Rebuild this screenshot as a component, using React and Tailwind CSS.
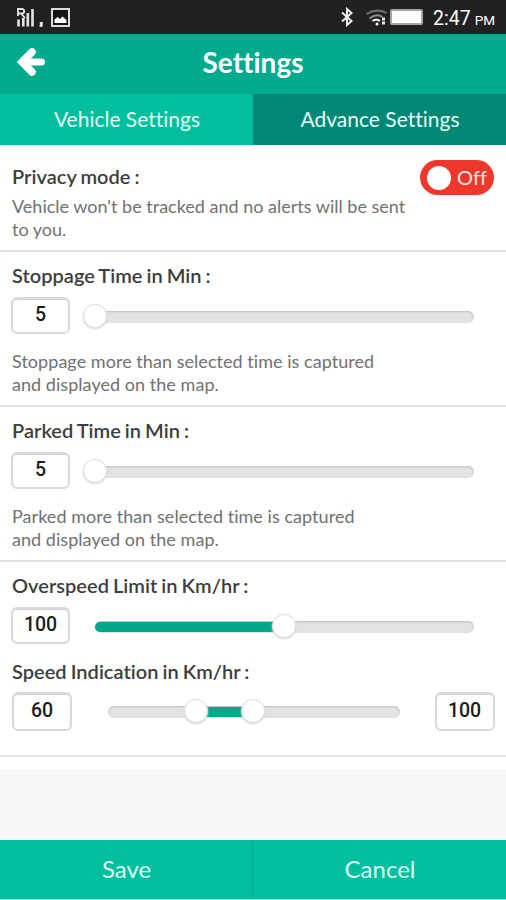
import React from "react";

function StatusBar() {
  return (
    <div className="flex h-[34px] items-center bg-[#212121] pr-[11px] pl-4 text-white">
      <svg width="27" height="20" viewBox="0 0 27 20" fill="none" stroke="#e4e4e4">
        <path d="M2 9V2h4a2 2 0 0 1 0 4.500H2M5 6.500l4 4.500" strokeWidth="1.800" />
        <path d="M2.500 12.500V19.500M7.300 11V19.500" strokeWidth="2.600" />
        <path d="M11.800 6V19.500M16.500 2V19.500" strokeWidth="2.600" />
        <path d="M25.300 15v3.500l-.8 1.500" strokeWidth="3" />
      </svg>
      <svg className="ml-2" width="19" height="19" viewBox="0 0 19 19">
        <rect x="1" y="1" width="17" height="17" fill="#151515" stroke="#dcdcdc" strokeWidth="2" />
        <path d="M3.500 15v-3.500l3-2.500 2.500 2 2.500-2.500 4 3.500v3z" fill="#fff" />
      </svg>
      <div className="flex-1" />
      <svg width="14" height="20" viewBox="0 0 14 20" fill="none" stroke="#ececec" strokeWidth="2">
        <path d="M2 5.500 11.500 14 7 18V2l4.500 4L2 14.500" />
      </svg>
      <svg className="ml-[11px]" width="24" height="20" viewBox="0 0 24 20" fill="none">
        <path d="M1.500 7Q11.500 1 21.500 6" stroke="#6e6e6e" strokeWidth="2.200" />
        <path d="M4.500 11.500Q11.500 6 17.500 10" stroke="#8a8a8a" strokeWidth="2" />
        <path d="M7.500 14Q11.500 11.500 15 14" stroke="#f0f0f0" strokeWidth="2" />
        <circle cx="12" cy="17" r="1.500" fill="#fff" />
        <path d="M18.500 10.500v3M18.500 14.500v3" stroke="#e5e5e5" strokeWidth="3" />
      </svg>
      <div className="ml-[1px] h-4 w-[33px] rounded-[2px] border-2 border-[#a5a5a5] bg-white" />
      <div className="mt-[3px] ml-[10px] flex items-baseline font-['Roboto',sans-serif] whitespace-nowrap">
        <span className="text-[19.500px] leading-6">2:47</span>
        <span className="ml-[4px] text-[13.500px]">PM</span>
      </div>
    </div>
  );
}

function Header() {
  return (
    <div className="grid h-[60px] grid-cols-[60px_1fr_60px] items-center bg-[#00aa8d] text-white">
      <svg className="-mt-[5px] ml-4" width="30" height="32" viewBox="0 0 30 32" fill="none" stroke="#fff" strokeWidth="7.500" strokeLinecap="round">
        <path d="M16 6 6 16l10 10" strokeLinejoin="miter" />
        <path d="M8 16h17.500" strokeWidth="7" />
      </svg>
      <h1 className="-mt-1 text-center text-[28px] font-bold">Settings</h1>
    </div>
  );
}

function ValueBox({ value, large }) {
  return (
    <div
      className={
        "flex shrink-0 justify-center rounded-md border-2 border-[#dadada] bg-white font-['Roboto',sans-serif] text-[19.500px] font-medium text-[#1c1c1c] shadow-[inset_0_1px_1px_#cfcfcf] " +
        (large ? "h-[39px] w-[60px] leading-[33px]" : "h-[37px] w-[59px] leading-[31px]")
      }
    >
      {value}
    </div>
  );
}

function Slider({ width, from, knobs }) {
  const end = knobs[knobs.length - 1];
  return (
    <div
      className="relative h-3 rounded-full bg-[#e3e3e3] shadow-[inset_0_1px_2px_#bdbdbd]"
      style={{ width }}
    >
      <div
        className="absolute top-[1px] h-[10px] rounded-l-full bg-[#00a88a]"
        style={{ left: from, width: end - from }}
      />
      {knobs.map((x) => (
        <div
          key={x}
          className="absolute -top-[7px] size-6 rounded-full border border-[#dedede] bg-white shadow-[0_1px_2px_#d5d5d5]"
          style={{ left: x - 12 }}
        />
      ))}
    </div>
  );
}

function Label({ children }) {
  return (
    <h2 className="text-[20px] leading-6 font-semibold tracking-[0.03px] [word-spacing:-1px] whitespace-nowrap text-[#3d3d3d]">
      {children}
    </h2>
  );
}

function TimeSection({ label, value, lines }) {
  return (
    <section className="h-[155px] border-b-2 border-[#e2e2e2] pt-[11px] pl-3">
      <Label>{label}</Label>
      <div className="-ml-px mt-[10px] flex items-center">
        <ValueBox value={value} />
        <div className="mt-[3px] ml-[25px]">
          <Slider width={379} from={0} knobs={[0]} />
        </div>
      </div>
      <p className="mt-4 text-[18px] leading-[22.500px] tracking-[0.045px] whitespace-nowrap text-[#717171]">
        {lines[0]}
        <br />
        {lines[1]}
      </p>
    </section>
  );
}

export default function App() {
  return (
    <div className="flex h-[900px] w-[506px] flex-col overflow-hidden bg-white font-['Lato',sans-serif] [font-variant-ligatures:none]">
      <StatusBar />
      <Header />
      <div className="grid h-[51px] grid-cols-2 text-center text-[21px] leading-[50px] text-[#e2fff8]">
        <div className="bg-[#00bf9c] pl-px">Vehicle Settings</div>
        <div className="bg-[#008775] pl-px">Advance Settings</div>
      </div>

      <section className="flex h-[107px] items-start justify-between border-b-2 border-[#e2e2e2] pt-[15px] pr-3 pl-3">
        <div className="pt-[4px]">
          <Label>Privacy mode :</Label>
          <p className="mt-[7px] text-[18px] leading-[22.500px] whitespace-nowrap text-[#717171]">
            Vehicle won't be tracked and no alerts will be sent
            <br />
            to you.
          </p>
        </div>
        <div className="-ml-10 flex h-[35px] w-[74px] shrink-0 items-center rounded-full bg-[#ef382b] pl-[7px] text-[20px] text-[#ffeae6]">
          <span className="size-6 rounded-full bg-white" />
          <span className="-mt-[2px] ml-[6px]">Off</span>
        </div>
      </section>

      <TimeSection
        label="Stoppage Time in Min :"
        value="5"
        lines={["Stoppage more than selected time is captured", "and displayed on the map."]}
      />
      <TimeSection
        label="Parked Time in Min :"
        value="5"
        lines={["Parked more than selected time is captured", "and displayed on the map."]}
      />

      <section className="h-[195px] border-b-2 border-[#e6e6e6] pt-[11px] pl-3">
        <Label>Overspeed Limit in Km/hr :</Label>
        <div className="-ml-px mt-[10px] flex items-center">
          <ValueBox value="100" />
          <div className="mt-[3px] ml-[25px]">
            <Slider width={379} from={0} knobs={[189]} />
          </div>
        </div>
        <div className="mt-[15px]">
          <Label>Speed Indication in Km/hr :</Label>
        </div>
        <div className="mt-[9px] flex items-center">
          <ValueBox value="60" large />
          <div className="mt-[1px] mr-[35px] ml-[35.500px]">
            <Slider width={292} from={88} knobs={[88, 145]} />
          </div>
          <ValueBox value="100" large />
        </div>
      </section>
      <div className="h-3" />
      <div className="h-[71px] bg-[#f8f8f8]" />
      <div className="grid h-[59px] grid-cols-2 text-center text-[24px] leading-[58px] text-[#dcfff7]">
        <div className="border-r border-[#00ad8e] bg-[#00bf9c] pl-px">Save</div>
        <div className="bg-[#00bf9c] pl-px">Cancel</div>
      </div>
      <div className="h-px bg-[#a5e6d8]" />
    </div>
  );
}
